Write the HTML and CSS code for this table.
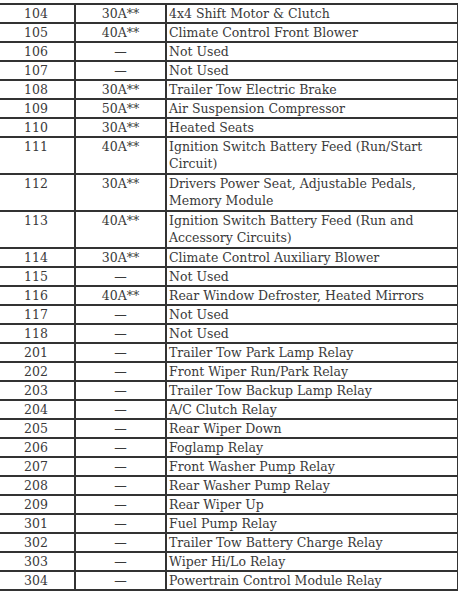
FILE: index.html
```html
<!DOCTYPE html>
<html>
<head>
<meta charset="utf-8">
<link rel="stylesheet" href="styles.css">
</head>
<body>
<table class="fuse-table">
  <colgroup><col class="c-num"><col class="c-amp"><col class="c-desc"></colgroup>
  <tbody>
    <tr><td class="num">104</td><td class="amp">30A**</td><td class="desc">4x4 Shift Motor &amp; Clutch</td></tr>
    <tr><td class="num">105</td><td class="amp">40A**</td><td class="desc">Climate Control Front Blower</td></tr>
    <tr><td class="num">106</td><td class="amp">—</td><td class="desc">Not Used</td></tr>
    <tr><td class="num">107</td><td class="amp">—</td><td class="desc">Not Used</td></tr>
    <tr><td class="num">108</td><td class="amp">30A**</td><td class="desc">Trailer Tow Electric Brake</td></tr>
    <tr><td class="num">109</td><td class="amp">50A**</td><td class="desc">Air Suspension Compressor</td></tr>
    <tr><td class="num">110</td><td class="amp">30A**</td><td class="desc">Heated Seats</td></tr>
    <tr class="tall"><td class="num">111</td><td class="amp">40A**</td><td class="desc">Ignition Switch Battery Feed (Run/Start<br>Circuit)</td></tr>
    <tr class="tall"><td class="num">112</td><td class="amp">30A**</td><td class="desc">Drivers Power Seat, Adjustable Pedals,<br>Memory Module</td></tr>
    <tr class="tall"><td class="num">113</td><td class="amp">40A**</td><td class="desc">Ignition Switch Battery Feed (Run and<br>Accessory Circuits)</td></tr>
    <tr><td class="num">114</td><td class="amp">30A**</td><td class="desc">Climate Control Auxiliary Blower</td></tr>
    <tr><td class="num">115</td><td class="amp">—</td><td class="desc">Not Used</td></tr>
    <tr><td class="num">116</td><td class="amp">40A**</td><td class="desc">Rear Window Defroster, Heated Mirrors</td></tr>
    <tr><td class="num">117</td><td class="amp">—</td><td class="desc">Not Used</td></tr>
    <tr><td class="num">118</td><td class="amp">—</td><td class="desc">Not Used</td></tr>
    <tr><td class="num">201</td><td class="amp">—</td><td class="desc">Trailer Tow Park Lamp Relay</td></tr>
    <tr><td class="num">202</td><td class="amp">—</td><td class="desc">Front Wiper Run/Park Relay</td></tr>
    <tr><td class="num">203</td><td class="amp">—</td><td class="desc">Trailer Tow Backup Lamp Relay</td></tr>
    <tr><td class="num">204</td><td class="amp">—</td><td class="desc">A/C Clutch Relay</td></tr>
    <tr><td class="num">205</td><td class="amp">—</td><td class="desc">Rear Wiper Down</td></tr>
    <tr><td class="num">206</td><td class="amp">—</td><td class="desc">Foglamp Relay</td></tr>
    <tr><td class="num">207</td><td class="amp">—</td><td class="desc">Front Washer Pump Relay</td></tr>
    <tr><td class="num">208</td><td class="amp">—</td><td class="desc">Rear Washer Pump Relay</td></tr>
    <tr><td class="num">209</td><td class="amp">—</td><td class="desc">Rear Wiper Up</td></tr>
    <tr><td class="num">301</td><td class="amp">—</td><td class="desc">Fuel Pump Relay</td></tr>
    <tr><td class="num">302</td><td class="amp">—</td><td class="desc">Trailer Tow Battery Charge Relay</td></tr>
    <tr><td class="num">303</td><td class="amp">—</td><td class="desc">Wiper Hi/Lo Relay</td></tr>
    <tr><td class="num">304</td><td class="amp">—</td><td class="desc">Powertrain Control Module Relay</td></tr>
  </tbody>
</table>
</body>
</html>
```
FILE: styles.css
```css
html, body {
  margin: 0;
  padding: 0;
  background: #ffffff;
}
body {
  padding-top: 3px;
  width: 458px;
  height: 591px;
  overflow: hidden;
  background: linear-gradient(#fff 0, #fff 590px, #cfcfcf 590px);
}
.fuse-table {
  border-collapse: collapse;
  table-layout: fixed;
  width: 461px;
  margin-left: -4px;
  font-family: "DejaVu Serif", serif;
  font-size: 12.5px;
  line-height: 17px;
  color: #3a3a3a;
  background: #fff;
}
.c-num { width: 78px; }
.c-amp { width: 91px; }
.c-desc { width: 292px; }
.fuse-table td {
  border: 2px solid #333;
  padding: 0;
  vertical-align: top;
  white-space: nowrap;
}
.num, .amp { text-align: center; }
.fuse-table td.desc { padding-left: 2px; }
.tall td { padding-bottom: 1px; }
```
